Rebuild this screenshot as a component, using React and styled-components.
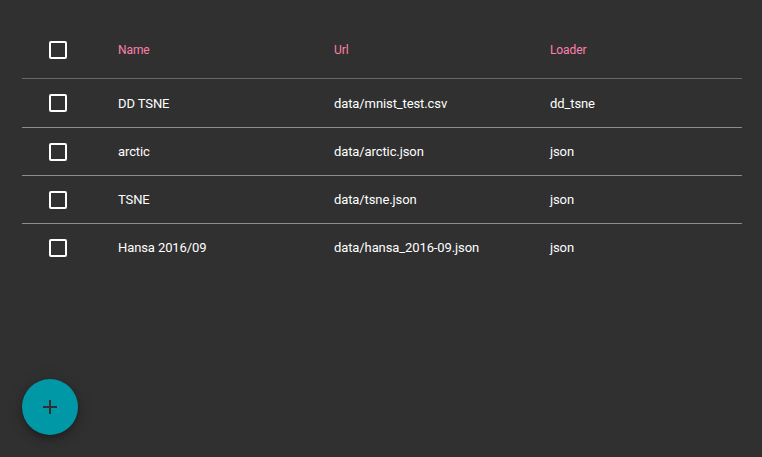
import styled, { createGlobalStyle } from "styled-components";

const Global = createGlobalStyle`
  html, body {
    margin: 0;
    background: #303030;
    font-family: Roboto, "Noto Sans", sans-serif;
  }
`;

const Page = styled.div`
  height: 457px;
  padding: 22px;
  box-sizing: border-box;
  display: flex;
  flex-direction: column;
  justify-content: space-between;
`;

const Table = styled.div`
  width: 720px;
  display: flex;
  flex-direction: column;
`;

const Row = styled.div`
  display: grid;
  grid-template-columns: 96px 216px 216px 1fr;
  align-items: center;
  height: ${(p) => (p.head ? "56px" : "47px")};
  border-bottom: 1px solid ${(p) => (p.head ? "#676767" : "#8c8c8c")};
  color: ${(p) => (p.head ? "#ff80ab" : "#ffffff")};
  font-size: ${(p) => (p.head ? "12px" : "13px")};

  &:nth-child(2) {
    height: 48px;
  }
  &:last-child {
    border-bottom: none;
  }
`;

const BoxCell = styled.div`
  padding-left: 27px;
  display: flex;
  align-items: center;
`;

const Checkbox = styled.span`
  width: 18px;
  height: 18px;
  box-sizing: border-box;
  border: 2px solid #ffffff;
  border-radius: 2px;
`;

const Cell = styled.div`
  white-space: nowrap;
  letter-spacing: -0.1px;
`;

const Fab = styled.button`
  width: 56px;
  height: 56px;
  border-radius: 50%;
  border: none;
  background: #0097a7;
  display: flex;
  align-items: center;
  justify-content: center;
  padding: 0;
  box-shadow: 0 3px 5px -1px rgba(0, 0, 0, 0.2), 0 6px 10px 0 rgba(0, 0, 0, 0.14),
    0 1px 18px 0 rgba(0, 0, 0, 0.12);
`;

const rows = [
  ["DD TSNE", "data/mnist_test.csv", "dd_tsne"],
  ["arctic", "data/arctic.json", "json"],
  ["TSNE", "data/tsne.json", "json"],
  ["Hansa 2016/09", "data/hansa_2016-09.json", "json"],
];

export default function App() {
  return (
    <>
      <Global />
      <Page>
        <Table>
          <Row head>
            <BoxCell>
              <Checkbox />
            </BoxCell>
            <Cell>Name</Cell>
            <Cell>Url</Cell>
            <Cell>Loader</Cell>
          </Row>
          {rows.map((r) => (
            <Row key={r[0]}>
              <BoxCell>
                <Checkbox />
              </BoxCell>
              <Cell>{r[0]}</Cell>
              <Cell>{r[1]}</Cell>
              <Cell>{r[2]}</Cell>
            </Row>
          ))}
        </Table>
        <Fab>
          <svg width="24" height="24" viewBox="0 0 24 24">
            <path d="M19 13h-6v6h-2v-6H5v-2h6V5h2v6h6v2z" fill="#303030" />
          </svg>
        </Fab>
      </Page>
    </>
  );
}
